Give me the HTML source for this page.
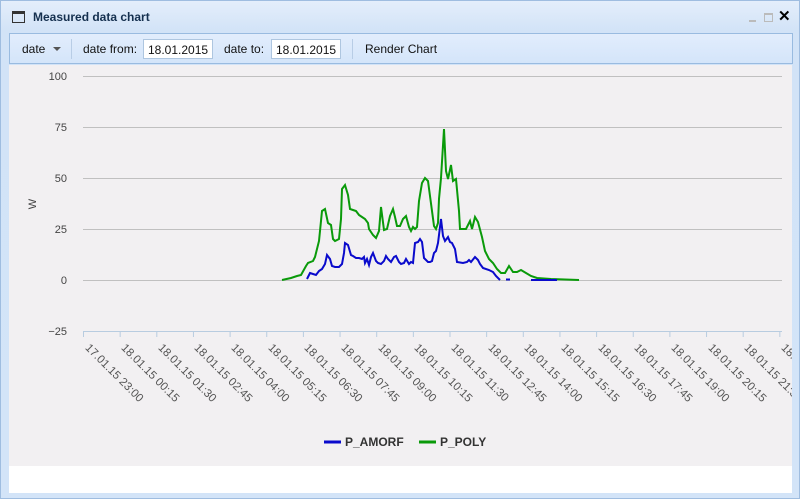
<!DOCTYPE html>
<html><head><meta charset="utf-8"><style>
*{margin:0;padding:0;box-sizing:border-box}
body{width:800px;height:499px;overflow:hidden;background:#d4e4f7;font-family:"Liberation Sans",sans-serif;position:relative}
.win{position:absolute;left:0;top:0;width:800px;height:499px;background:linear-gradient(#e4eefb,#d2e3f7 30px,#d3e4f8);border:1px solid #9fbde0}
.title{position:absolute;left:32px;top:9px;font-size:12px;font-weight:bold;color:#15304f}
.tb{position:absolute;left:8px;top:32px;width:784px;height:31px;background:linear-gradient(#e2edfc,#d4e5fa);border:1px solid #99bbe0}
.tb span{position:absolute;top:8px;font-size:12px;color:#111}
.inp{position:absolute;top:5px;height:20px;width:70px;background:#fff;border:1px solid #aec6e0;font-size:12px;padding:3px 4px;color:#111}
.sep{position:absolute;top:5px;width:1px;height:20px;background:#b8cde6}
.bodyc{position:absolute;left:8px;top:64px;width:783px;height:428px;background:#fff;overflow:hidden}
.chart{position:absolute;left:0;top:0;width:783px;height:401px;background:#f2f0f2;overflow:hidden}
.lbl{position:absolute;font-size:11.5px;color:#555;white-space:nowrap;transform:rotate(45deg);transform-origin:0 0}
</style></head><body>
<div class="win">
<svg style="position:absolute;left:11px;top:10px" width="13" height="12"><rect x="0.5" y="0.5" width="12" height="11" fill="none" stroke="#333"/><rect x="0" y="0" width="13" height="3" fill="#333"/></svg>
<div class="title">Measured data chart</div>
<div style="position:absolute;left:748px;top:19px;width:7px;height:2px;background:#bbb"></div>
<div style="position:absolute;left:763px;top:12px;width:9px;height:9px;border:1px solid #bbb;border-top-width:2px"></div>
<div style="position:absolute;left:777px;top:6px;font-size:15px;font-weight:bold;color:#000">✕</div>
<div class="tb">
<span style="left:12px">date</span>
<svg style="position:absolute;left:43px;top:13px" width="8" height="5"><path d="M0 0H8L4 4Z" fill="#555"/></svg>
<div class="sep" style="left:61px"></div>
<span style="left:73px">date from:</span>
<div class="inp" style="left:133px">18.01.2015</div>
<span style="left:214px">date to:</span>
<div class="inp" style="left:261px">18.01.2015</div>
<div class="sep" style="left:342px"></div>
<span style="left:355px">Render Chart</span>
</div>
<div class="bodyc">
<div class="chart">
<svg style="position:absolute;left:-8px;top:-64px" width="800" height="499">
<g stroke="#c0c0c0" stroke-width="1">
<line x1="82" y1="75.5" x2="781" y2="75.5"/><line x1="82" y1="126.5" x2="781" y2="126.5"/><line x1="82" y1="177.5" x2="781" y2="177.5"/><line x1="82" y1="228.5" x2="781" y2="228.5"/><line x1="82" y1="279.5" x2="781" y2="279.5"/>
</g>
<line x1="82" y1="330.5" x2="781" y2="330.5" stroke="#b8cce0"/>
<g stroke="#b8cce0" id="ticks"></g>
<g font-size="11" fill="#444" text-anchor="end" font-family="Liberation Sans">
<text x="66" y="79">100</text><text x="66" y="130">75</text><text x="66" y="181">50</text><text x="66" y="232">25</text><text x="66" y="283">0</text><text x="66" y="334">−25</text>
<text transform="translate(35,203) rotate(-90)" text-anchor="middle">W</text>
</g>
<polyline fill="none" stroke="#0a9a0a" stroke-width="2" points="281,279 290,277 296,275 300,274 305,265 307,262 312,260 314,256 318,240 321,210 324,208 327,222 330,224 332,238 334,240 338,238 340,218 341,188 344,184 347,194 349,208 352,209 355,210 358,214 361,216 364,218 367,222 368,228 372,234 375,237 378,230 380,206 383,229 386,228 389,215 392,208 394,216 396,225 399,225 402,218 405,215 408,226 410,230 412,226 414,228 416,226 418,200 421,182 424,177 427,180 429,195 431,210 433,225 435,228 437,222 438,198 440,177 443,128 445,170 447,178 450,164 452,180 455,178 458,210 459,228 465,228 469,220 471,228 474,216 477,221 481,236 484,250 488,258 492,262 496,268 500,272 504,272 508,265 512,271 516,271 520,269 525,272 530,275 536,277 550,278 578,279"/>
<polyline fill="none" stroke="#0a0acc" stroke-width="2" points="306,278 309,272 312,273 315,274 318,270 321,268 324,263 326,254 329,258 331,265 334,266 338,266 341,263 343,252 344,242 347,244 350,254 352,255 355,257 358,257 361,258 363,256 364,262 366,258 368,264 370,256 372,252 375,260 377,262 380,263 383,260 385,255 387,258 390,261 393,256 395,255 398,261 400,263 403,262 405,258 408,263 410,261 412,262 414,242 417,241 419,238 421,241 423,257 427,261 429,261 431,260 433,252 435,250 437,242 440,218 442,235 444,240 447,236 449,241 451,242 454,248 456,261 462,262 466,261 468,259 470,261 474,256 477,259 479,263 482,267 488,269 492,271 495,275 499,279"/>
<line x1="505" y1="278.5" x2="509" y2="278.5" stroke="#0a0acc" stroke-width="2"/>
<line x1="530" y1="279" x2="556" y2="279" stroke="#0a0acc" stroke-width="2"/>
<line x1="323" y1="441" x2="340" y2="441" stroke="#0a0acc" stroke-width="3"/>
<line x1="418" y1="441" x2="435" y2="441" stroke="#0a9a0a" stroke-width="3"/>
<g font-size="12" font-weight="bold" fill="#333" font-family="Liberation Sans"><text x="344" y="445">P_AMORF</text><text x="439" y="445">P_POLY</text></g>
</svg>
<div id="labels"></div>
</div>
</div>
</div>
<script>
var names=["17.01.15 23:00","18.01.15 00:15","18.01.15 01:30","18.01.15 02:45","18.01.15 04:00","18.01.15 05:15","18.01.15 06:30","18.01.15 07:45","18.01.15 09:00","18.01.15 10:15","18.01.15 11:30","18.01.15 12:45","18.01.15 14:00","18.01.15 15:15","18.01.15 16:30","18.01.15 17:45","18.01.15 19:00","18.01.15 20:15","18.01.15 21:30","18.01.15 22:45"];
var t=document.getElementById("ticks"),l=document.getElementById("labels"),h="",s="";
for(var i=0;i<20;i++){var x=82.5+i*36.65;h+='<line x1="'+x+'" y1="330" x2="'+x+'" y2="336"/>';
s+='<div class="lbl" style="left:'+(x-8+7)+'px;top:'+(341-64)+'px">'+names[i]+'</div>';}
t.innerHTML=h;l.innerHTML=s;
</script>
</body></html>
